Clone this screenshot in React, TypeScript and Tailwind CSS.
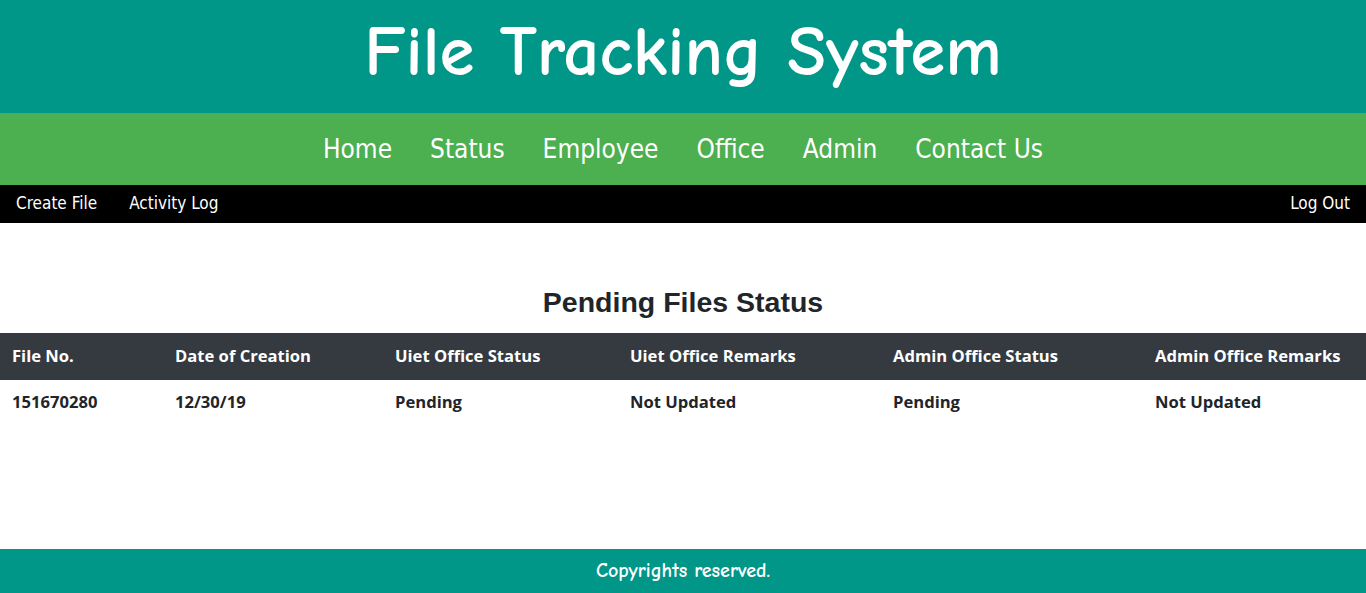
const navLinks = ["Home", "Status", "Employee", "Office", "Admin", "Contact Us"];

const columns = [
  { label: "File No.", w: "w-[163px]" },
  { label: "Date of Creation", w: "w-[220px]" },
  { label: "Uiet Office Status", w: "w-[235px]" },
  { label: "Uiet Office Remarks", w: "w-[263px]" },
  { label: "Admin Office Status", w: "w-[262px]" },
  { label: "Admin Office Remarks", w: "w-[223px]" },
];

const rows = [["151670280", "12/30/19", "Pending", "Not Updated", "Pending", "Not Updated"]];

export default function App() {
  return (
    <div className="flex min-h-[593px] flex-col bg-white text-[#212529]">
      {/* Title banner */}
      <header className="flex h-[113px] items-center justify-center bg-[#009688]">
        <h1 className="pb-2 font-['Comic_Sans_MS','Comic_Neue',cursive] text-[71px] font-bold leading-none text-white">
          File Tracking System
        </h1>
      </header>

      {/* Main nav */}
      <nav className="flex h-[72px] items-center justify-center gap-[38px] bg-[#4caf50] font-['Tahoma','DejaVu_Sans_Condensed','Liberation_Sans',sans-serif] text-[26px] text-white">
        {navLinks.map((l) => (
          <a key={l} href="#" className="leading-none">
            {l}
          </a>
        ))}
      </nav>

      {/* Sub nav */}
      <div className="flex h-[38px] items-center bg-black px-4 font-['Tahoma','DejaVu_Sans_Condensed','Liberation_Sans',sans-serif] text-[17px] text-white">
        <a href="#" className="mr-8">Create File</a>
        <a href="#">Activity Log</a>
        <a href="#" className="ml-auto">Log Out</a>
      </div>

      <main className="flex-1 pt-[62px]">
        <h3 className="mb-[14px] text-center font-['Liberation_Sans',sans-serif] text-[28.5px] font-bold leading-[34px]">
          Pending Files Status
        </h3>
        <table className="w-full border-collapse text-left font-['Open_Sans',sans-serif] text-[16.6px] font-bold">
          <thead>
            <tr className="bg-[#343a40] text-white">
              {columns.map((c) => (
                <th key={c.label} className={`${c.w} h-[47px] px-3 align-middle`}>
                  {c.label}
                </th>
              ))}
            </tr>
          </thead>
          <tbody>
            {rows.map((r) => (
              <tr key={r[0]}>
                {r.map((cell, i) => (
                  <td key={i} className="h-[45px] px-3 align-middle">
                    {cell}
                  </td>
                ))}
              </tr>
            ))}
          </tbody>
        </table>
      </main>

      <footer className="flex h-[44px] items-center justify-center bg-[#009688] font-['Comic_Sans_MS','Comic_Neue',cursive] text-[20px] font-bold text-white">
        Copyrights reserved.
      </footer>
    </div>
  );
}
